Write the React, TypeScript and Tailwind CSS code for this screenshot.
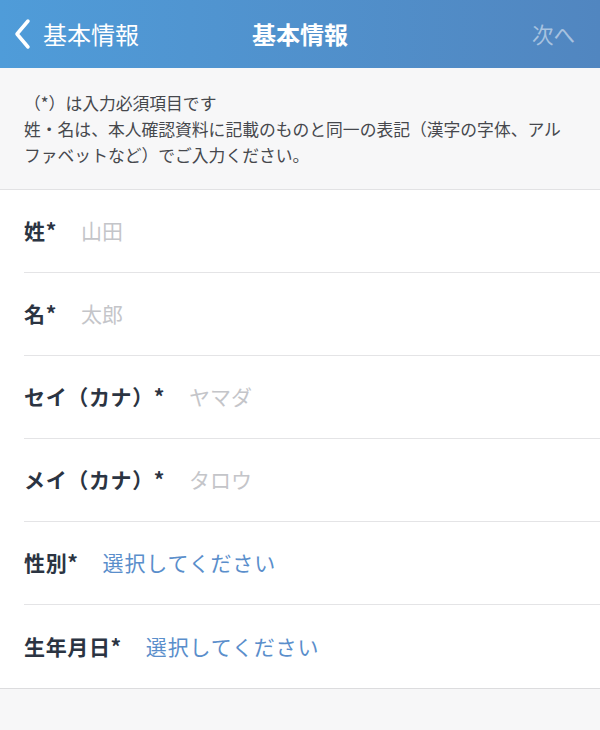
import React from "react";

const rows = [
  { label: "姓*", value: "山田", select: false },
  { label: "名*", value: "太郎", select: false },
  { label: "セイ（カナ）*", value: "ヤマダ", select: false },
  { label: "メイ（カナ）*", value: "タロウ", select: false },
  { label: "性別*", value: "選択してください", select: true },
  { label: "生年月日*", value: "選択してください", select: true },
];

const App = () => {
  return (
    <div
      className="w-[600px] h-[730px] bg-[#f7f7f8] flex flex-col overflow-hidden"
      style={{ fontFamily: '"Noto Sans CJK JP", "Noto Sans", sans-serif' }}
    >
      {/* Header */}
      <div className="h-[68px] shrink-0 bg-gradient-to-r from-[#4f9cd9] to-[#5186c0] flex items-center relative">
        <div className="flex items-center pl-[12px] gap-[9px] text-white">
          <svg width="22" height="32" viewBox="0 0 22 32" fill="none">
            <path
              d="M16 3 L5 16 L16 29"
              stroke="white"
              strokeWidth="3.5"
              strokeLinecap="round"
              strokeLinejoin="round"
            />
          </svg>
          <span className="text-[24px] leading-none">基本情報</span>
        </div>
        <div className="absolute left-0 right-0 text-center text-white text-[24px] font-bold leading-none pointer-events-none">
          基本情報
        </div>
        <div className="ml-auto pr-[25px] text-[21.5px] leading-none text-white/50">
          次へ
        </div>
      </div>

      {/* Notice */}
      <div className="pt-[22px] pb-[21px] px-[24px] text-[16.8px] leading-[26px] text-[#46484d] border-b border-[#e2e2e4]">
        <div>（*）は入力必須項目です</div>
        <div>
          姓・名は、本人確認資料に記載のものと同一の表記（漢字の字体、アルファベットなど）でご入力ください。
        </div>
      </div>

      {/* Form */}
      <div className="bg-white border-b border-[#dcdcde]">
        {rows.map((r, i) => (
          <div key={i} className="pl-[24px]">
            <div
              className={`h-[83px] flex items-center gap-[24px] ${
                i < rows.length - 1 ? "border-b border-[#e4e4e6]" : ""
              }`}
            >
              <span className="text-[21px] font-bold text-[#2b3442] tracking-[0.03em]">
                {r.label}
              </span>
              <span
                className={
                  r.select
                    ? "text-[21px] text-[#5a8ecb] tracking-[0.04em]"
                    : "text-[21px] text-[#c4c5c9]"
                }
              >
                {r.value}
              </span>
            </div>
          </div>
        ))}
      </div>
    </div>
  );
};

export default App;
